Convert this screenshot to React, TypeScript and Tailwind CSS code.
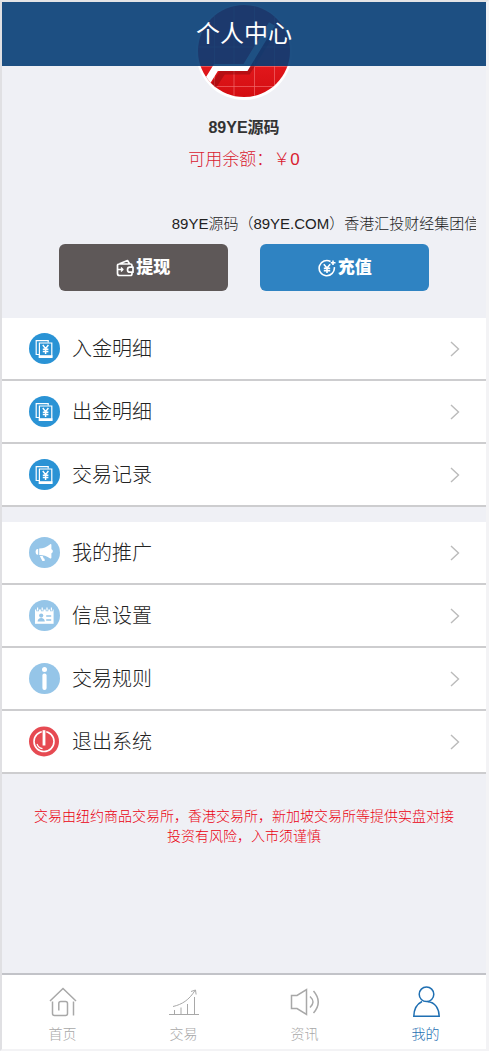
import type { ReactNode } from "react"

type Item = { label: string; icon: ReactNode }

function BillIcon() {
  return (
    <svg viewBox="0 0 31 31" className="size-[31px]" aria-hidden="true">
      <circle cx="15.5" cy="15.5" r="15.5" fill="#2a93d5" />
      <g fill="none" stroke="#fff" strokeWidth="1.2">
        <path d="M10 21.5H7.2V7.6h12v2" />
        <path d="M10.4 10h12.4v14.2H10.4z" />
        <path d="M13.8 12l2.8 3.6 2.8-3.6M16.6 15.500v5.500M13.800 16.200h5.600M13.800 18.500h5.600" strokeWidth="1.500" />
      </g>
      <path d="M9.800 22.200h13.600v2.800H9.800z" fill="#fff" />
    </svg>
  )
}

function HornIcon() {
  return (
    <svg viewBox="0 0 31 31" className="size-[31px]" aria-hidden="true">
      <circle cx="15.5" cy="15.5" r="15.5" fill="#95c5e8" />
      <g fill="#fff">
        <path d="M10.2 11.600c4 0 7.800-1.800 11-4.400.6-.4 1.200 0 1.200.6v4.400c.9.200 1.400 1 1.400 2s-.5 1.900-1.400 2.100v4.500c0 .6-.6 1-1.200.6-3.200-2.300-7-3.400-11-3.400z" />
        <path d="M9.200 12v5.700h-.6c-1.300 0-2-1.200-2-2.800s.7-2.900 2-2.900z" />
        <path d="M10.800 19h2.800l1.200 2.500.8.300.1 2.200h-2.300z" />
      </g>
    </svg>
  )
}

function CardIcon() {
  return (
    <svg viewBox="0 0 31 31" className="size-[31px]" aria-hidden="true">
      <circle cx="15.5" cy="15.5" r="15.5" fill="#95c5e8" />
      <path d="M6 9.500h18.600v14.300H6z" fill="#fff" />
      <path d="M8.600 7.500v3.800M13.200 7.500v3.800M18 7.500v3.800M22.400 7.500v3.800" stroke="#95c5e8" strokeWidth="2.600" />
      <path d="M8.600 7.500v3M13.200 7.500v3M18 7.500v3M22.400 7.500v3" stroke="#fff" strokeWidth="1.200" />
      <path d="M17.200 16h5M17.200 20h5" stroke="#95c5e8" strokeWidth="1.500" />
      <circle cx="12.200" cy="15.600" r="2.100" fill="#95c5e8" />
      <path d="M8.600 21.500c0-2.400 1.500-3.600 3.600-3.600s3.600 1.200 3.600 3.600z" fill="#95c5e8" />
    </svg>
  )
}

function InfoIcon() {
  return (
    <svg viewBox="0 0 31 31" className="size-[31px]" aria-hidden="true">
      <circle cx="15.5" cy="15.5" r="15.5" fill="#95c5e8" />
      <circle cx="15.5" cy="6.500" r="2.500" fill="#fff" />
      <rect x="13.400" y="10.500" width="4.200" height="16.500" rx="2" fill="#fff" />
    </svg>
  )
}

function PowerIcon() {
  return (
    <svg viewBox="0 0 31 31" className="size-[31px]" aria-hidden="true">
      <circle cx="15" cy="15.5" r="15" fill="#e64a52" />
      <circle cx="15" cy="15.5" r="10" fill="none" stroke="#fff" strokeWidth="1.600" />
      <path d="M15 4v15.500" stroke="#e64a52" strokeWidth="4.600" />
      <path d="M15 4.200v15.300" stroke="#fff" strokeWidth="2.800" />
      <path d="M8 18c1 2.600 2.900 4.200 5.500 4.700" fill="none" stroke="#fff" strokeWidth="1.200" />
    </svg>
  )
}

const FUNDS: Item[] = [
  { label: "入金明细", icon: <BillIcon /> },
  { label: "出金明细", icon: <BillIcon /> },
  { label: "交易记录", icon: <BillIcon /> },
]

const ACCOUNT: Item[] = [
  { label: "我的推广", icon: <HornIcon /> },
  { label: "信息设置", icon: <CardIcon /> },
  { label: "交易规则", icon: <InfoIcon /> },
  { label: "退出系统", icon: <PowerIcon /> },
]

const TABS: Item[] = [
  {
    label: "首页",
    icon: (
      <g strokeWidth="1.500">
        <path d="M3 16L16 3.500 29 16" />
        <path d="M5.500 16.500v12q0 2 2 2H18.500q2 0 2-2V18.500q0-2-2-2h-4.700q-2 0-2 2V25.500" />
        <path d="M26.500 16.500v14" />
      </g>
    ),
  },
  {
    label: "交易",
    icon: (
      <g strokeWidth="1">
        <path d="M1 29.500h30M6.500 29v-4M13 29v-6.500M19.500 29V19M26.500 29V12" />
        <path d="M5 21.500C14 19.500 21 15 27 5.500M23 6.500l4.500-1.500.6 4.500" />
      </g>
    ),
  },
  {
    label: "资讯",
    icon: (
      <g strokeWidth="1.500">
        <path d="M2.500 10.500h5.500l9.500-6v25l-9.500-6H2.500z" />
        <path d="M21 11.500q6 5.500 0 11M24.500 6q9.500 11 0 22" />
      </g>
    ),
  },
  {
    label: "我的",
    icon: (
      <g strokeWidth="1.500">
        <circle cx="16.500" cy="9.300" r="7.300" />
        <path d="M12 16.500C7 19 4 24 3.800 31.200h25.400C29 24 25.500 17 17.500 16.700" />
      </g>
    ),
  },
]

function Menu({ items }: { items: Item[] }) {
  return (
    <ul className="bg-white">
      {items.map((item) => (
        <li key={item.label} className="border-b-2 border-[#cdcdcf]">
          <a href="#" className="flex h-[61px] items-center gap-3 pr-[26px] pl-[27px] text-xl font-light text-[#222]">
            {item.icon}
            <span className="flex-1">{item.label}</span>
            <svg viewBox="0 0 10 16" className="h-4 w-2.5" fill="none" stroke="#bbb" strokeWidth="1.400" aria-hidden="true">
              <path d="M1 1l7.500 7L1 15" />
            </svg>
          </a>
        </li>
      ))}
    </ul>
  )
}

function Avatar() {
  return (
    <svg viewBox="0 0 96 96" className="mx-auto size-24" role="img" aria-label="89YE">
      <defs>
        <clipPath id="face">
          <circle cx="48" cy="47" r="46" />
        </clipPath>
        <linearGradient id="red" x1="0" y1="0" x2="0" y2="1">
          <stop offset="0.5" stopColor="#e81c20" />
          <stop offset="1" stopColor="#d20c10" />
        </linearGradient>
      </defs>
      <circle cx="48" cy="48" r="48" fill="#fff" />
      <g clipPath="url(#face)">
        <path d="M0 0h96v96H0z" fill="url(#red)" />
        <path d="M18.500 0v96M38 0v96M58.500 0v96M78.500 0v96M0 43h96M0 62.500h96M0 82.500h96" stroke="#f0686a" strokeWidth="0.700" />
        <path d="M15 86L27 67.500h25L79 24" fill="none" stroke="#8e0a0d" strokeOpacity="0.500" strokeWidth="6" />
        <path d="M6 86L20 63.500H49.500L76 20" fill="none" stroke="#fff" strokeWidth="7" />
      </g>
    </svg>
  )
}

export default function App() {
  return (
    <div className="flex min-h-screen flex-col border-y-2 border-r-3 border-l-2 border-[#f3f3f5] border-t-[#e4e4e6] border-l-[#e0e0e3] bg-[#eff0f5] font-['Liberation_Sans','Noto_Sans_CJK_SC',sans-serif]">
      <header className="sticky top-0 z-10 flex h-16 items-center justify-center bg-[#053d75]/90">
        <h1 className="text-2xl text-white">个人中心</h1>
      </header>

      <main className="flex-1">
        <section className="-mt-[62px] text-center">
          <Avatar />
          <h2 className="mt-4 text-base leading-6 font-bold text-[#333]">89YE源码</h2>
          <p className="mt-2 text-[17px] leading-6 font-light text-[#d9202f]">可用余额：￥0</p>
        </section>

        <div className="mx-[10px] mt-10 overflow-hidden pl-[33%] text-[15px] leading-6 font-light whitespace-nowrap text-[#222]">
          89YE源码（89YE.COM）香港汇投财经集团信
        </div>

        <div className="mt-2 flex justify-center gap-8 text-[17px] font-black text-white">
          <button className="flex h-[47px] w-[35%] items-center justify-center gap-0.5 rounded-md bg-[#5e5858]">
            <svg viewBox="0 0 18 18" className="size-[18px]" fill="none" stroke="currentColor" strokeWidth="1.700" strokeLinejoin="round" aria-hidden="true">
              <path d="M1.500 6v8.500q0 2 2 2h10.800q1.700 0 1.700-1.700v-1.600M16 8.300V6.500q0-1.500-1.500-1.500H3.500q-2 0-2 1.500M3.500 4.800l8-3.300 2 3.300" />
              <path d="M17 8.200h-3.200q-2.300 0-2.300 2.500t2.300 2.500H17z" />
              <path d="M2 10.500h4.500M5 8.500l2 2-2 2" strokeWidth="1.300" />
            </svg>
            提现
          </button>
          <button className="flex h-[47px] w-[35%] items-center justify-center gap-0.5 rounded-md bg-[#2f83c2]">
            <svg viewBox="0 0 18 18" className="size-[18px]" fill="none" stroke="currentColor" strokeWidth="1.600" aria-hidden="true">
              <path d="M16.300 8.200A7.600 7.600 0 1 1 12.500 2.500M15 1.500v4.500M12.800 3.700h4.700" />
              <path d="M5.800 5.300L9 9l3.200-3.700M9 9v5M5.800 9.300h6.400M5.800 11.600h6.400" />
            </svg>
            充值
          </button>
        </div>

        <div className="mt-[27px] flex flex-col gap-[15px]">
          <Menu items={FUNDS} />
          <Menu items={ACCOUNT} />
        </div>

        <p className="mt-8 px-4 text-center text-sm leading-5 font-light text-[#ea0010]">
          交易由纽约商品交易所，香港交易所，新加坡交易所等提供实盘对接
          <br />
          投资有风险，入市须谨慎
        </p>
      </main>

      <nav className="sticky bottom-0 grid h-[76px] grid-cols-4 border-t-2 border-[#c2c3c8] bg-white">
        {TABS.map((tab) => (
          <a
            key={tab.label}
            href="#"
            className={`flex flex-col items-center pt-2.5 text-sm leading-5 font-light ${
              tab.label === "我的" ? "text-[#1f6fb2]" : "text-[#a8a8a8]"
            }`}
          >
            <svg viewBox="0 0 32 32" className="mb-[7px] size-8" fill="none" stroke="currentColor" aria-hidden="true">
              {tab.icon}
            </svg>
            {tab.label}
          </a>
        ))}
      </nav>
    </div>
  )
}
